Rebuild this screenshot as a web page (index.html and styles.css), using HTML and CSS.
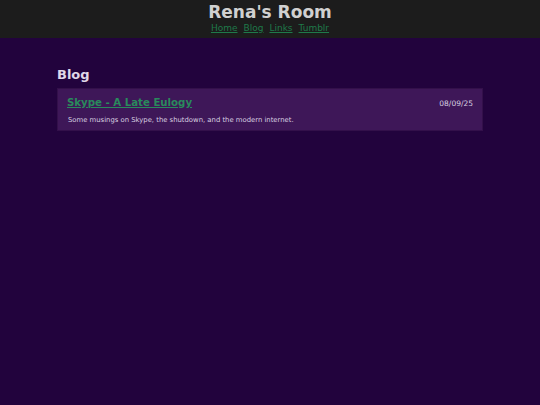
FILE: index.html
```html
<!DOCTYPE html>
<html>
<head>
<meta charset="utf-8">
<link rel="stylesheet" href="styles.css">
</head>
<body>
<header class="site-header">
  <h1 class="site-title">Rena's Room</h1>
  <nav class="site-nav">
    <a href="#">Home</a>
    <a href="#">Blog</a>
    <a href="#">Links</a>
    <a href="#">Tumblr</a>
  </nav>
</header>
<main class="content">
  <h2 class="section-title">Blog</h2>
  <article class="post">
    <div class="post-head">
      <a class="post-title" href="#">Skype - A Late Eulogy</a>
      <span class="post-date">08/09/25</span>
    </div>
    <p class="post-summary">Some musings on Skype, the shutdown, and the modern internet.</p>
  </article>
</main>
</body>
</html>
```
FILE: styles.css
```css
html, body {
  margin: 0;
  padding: 0;
}
body {
  background: #22033d;
  font-family: "DejaVu Sans", Verdana, sans-serif;
  color: #d8d0e0;
  min-height: 405px;
}
.site-header {
  background: #1c1c1c;
  text-align: center;
  padding: 2px 0 4px;
  height: 32px;
  box-sizing: content-box;
}
.site-title {
  margin: 0;
  font-size: 17px;
  line-height: 21px;
  color: #d0d0d0;
  font-weight: bold;
}
.site-nav {
  display: flex;
  justify-content: center;
  gap: 6px;
  font-size: 9px;
  line-height: 11px;
}
.site-nav a {
  color: #1f7a4a;
}
.content {
  width: 426px;
  margin: 0 auto;
  padding-top: 29px;
}
.section-title {
  margin: 0 0 5px;
  font-size: 13px;
  line-height: 16px;
  color: #e0d8e8;
}
.post {
  background: #3e1758;
  border: 1px solid #33104a;
  padding: 7px 10px 5px 9px;
}
.post-head {
  display: flex;
  justify-content: space-between;
  align-items: center;
}
.post-title {
  color: #2a8a5c;
  font-weight: bold;
  font-size: 10.2px;
  line-height: 14px;
}
.post-date {
  font-size: 7.5px;
  color: #d8d0e0;
  margin-right: -1px;
}
.post-summary {
  margin: 6px 0 0 1px;
  font-size: 6.85px;
  line-height: 9px;
  color: #d8d0e0;
}
```
